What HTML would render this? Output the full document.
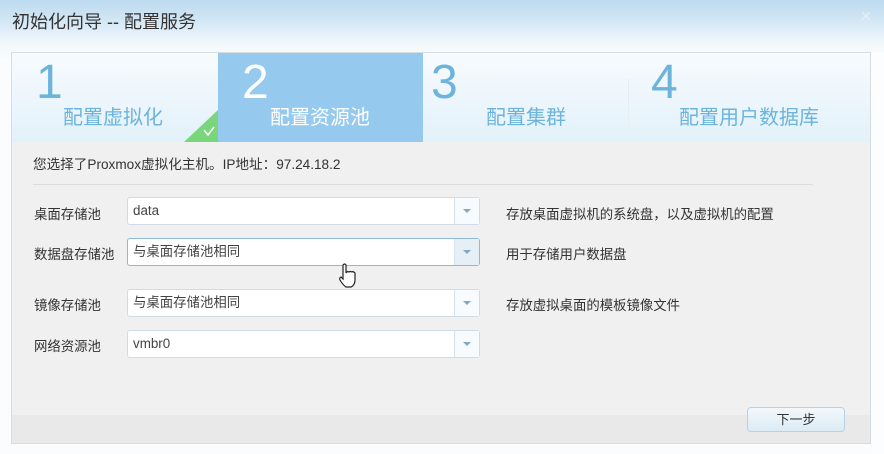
<!DOCTYPE html>
<html><head><meta charset="utf-8"><style>
*{margin:0;padding:0;box-sizing:border-box}
body{width:884px;height:454px;overflow:hidden;font-family:"Liberation Sans","Noto Sans CJK SC",sans-serif;background:linear-gradient(#bcd9ee 0px,#d8eaf6 25px,#f2f8fc 45px,#fafcfe 60px);position:relative;font-size:13px;color:#333}
.title{position:absolute;left:12px;top:8px;font-size:18px;color:#333}
.close{position:absolute;left:860px;top:8px;color:#e8eef3;font-size:14px}
.panel{position:absolute;left:11px;top:52px;width:860px;height:392px;border:1px solid #d6dde3;background:#f0f0f0}
.steps{position:absolute;left:0;top:0;width:858px;height:89px;background:linear-gradient(#f7fbfe,#e3f1fa)}
.step{position:absolute;top:0;height:89px;color:#6cb4dc}
.num{position:absolute;top:4px;font-size:48px;line-height:52px}
.lbl{position:absolute;top:48px;font-size:20px}
.s2{left:206px;width:205px;background:#95c9ee;color:#fff}
.sep{position:absolute;top:26px;width:1px;height:50px;background:#e6eef4}
.info{position:absolute;left:21px;top:100px;font-size:13.6px;color:#333}
.hr{position:absolute;left:21px;top:131px;width:780px;height:1px;background:#dcdcdc}
.row label{position:absolute;left:22px;font-size:13.4px}
.inp{position:absolute;left:115px;width:353px;height:28px;border:1px solid #cfdce6;border-radius:3px;background:#fff;padding-left:5px;line-height:26px;font-size:13.4px;color:#444}
.inp .dd{position:absolute;right:0;top:0;width:25px;height:26px;border-left:1px solid #d7e2ea;background:#f8fbfd}
.inp .dd:after{content:"";position:absolute;left:8px;top:11px;border-left:4px solid transparent;border-right:4px solid transparent;border-top:4px solid #7fa9c6}
.desc{position:absolute;left:494px;font-size:13.4px}
.bottom{position:absolute;left:0;top:362px;width:858px;height:28px;background:#e9e9e9}
.btn{position:absolute;left:735px;top:354px;width:98px;height:25px;border:1px solid #b7d2e6;border-radius:4px;background:linear-gradient(#f2f8fc,#dcebf5);text-align:center;line-height:23px;font-size:13px}
.right{position:absolute;left:872px;top:52px;width:12px;height:402px;background:#fbfdfe}
</style></head><body>
<div class="title">初始化向导 -- 配置服务</div>
<div class="close">✕</div>
<div class="panel">
 <div class="steps">
  <div class="step" style="left:0;width:206px"><div class="num" style="left:24px">1</div><div class="lbl" style="left:51px">配置虚拟化</div>
   <svg style="position:absolute;left:172px;top:57px" width="34" height="32"><polygon points="34,0 34,32 0,32" fill="#7ad67b"/><path d="M20 20 L24 25 L30 17" stroke="#fff" stroke-width="1.5" fill="none"/></svg></div>
  <div class="step s2"><div class="num" style="left:24px">2</div><div class="lbl" style="left:52px">配置资源池</div></div>
  <div class="step" style="left:411px;width:205px"><div class="num" style="left:8px">3</div><div class="lbl" style="left:63px">配置集群</div></div>
  <div class="sep" style="left:616px"></div>
  <div class="step" style="left:617px;width:241px"><div class="num" style="left:22px">4</div><div class="lbl" style="left:50px">配置用户数据库</div></div>
 </div>
 <div class="info">您选择了Proxmox虚拟化主机。IP地址：97.24.18.2</div>
 <div class="hr"></div>
 <div class="row"><label style="top:150px">桌面存储池</label><div class="inp" style="top:144px">data<div class="dd"></div></div><div class="desc" style="top:150px">存放桌面虚拟机的系统盘，以及虚拟机的配置</div></div>
 <div class="row"><label style="top:190px">数据盘存储池</label><div class="inp" style="top:185px;border-color:#8fb8d8">与桌面存储池相同<div class="dd" style="background:#e6eff6"></div></div><div class="desc" style="top:190px">用于存储用户数据盘</div></div>
 <div class="row"><label style="top:241px">镜像存储池</label><div class="inp" style="top:236px">与桌面存储池相同<div class="dd"></div></div><div class="desc" style="top:241px">存放虚拟桌面的模板镜像文件</div></div>
 <div class="row"><label style="top:282px">网络资源池</label><div class="inp" style="top:277px">vmbr0<div class="dd"></div></div></div>
 <svg style="position:absolute;left:326px;top:210px" width="20" height="26"><path d="M5 2 q2-2 3 0 v8 q1-2 3-1 q1-1 3 0 q1-1 3 1 v7 q0 5-4 7 h-5 q-3-2-6-7 q-1-2 1-3 l2 2 z" fill="#fff" stroke="#222" stroke-width="1.2"/></svg>
 <div class="bottom"></div>
 <div class="btn">下一步</div>
</div>
<div class="right"></div>
</body></html>
